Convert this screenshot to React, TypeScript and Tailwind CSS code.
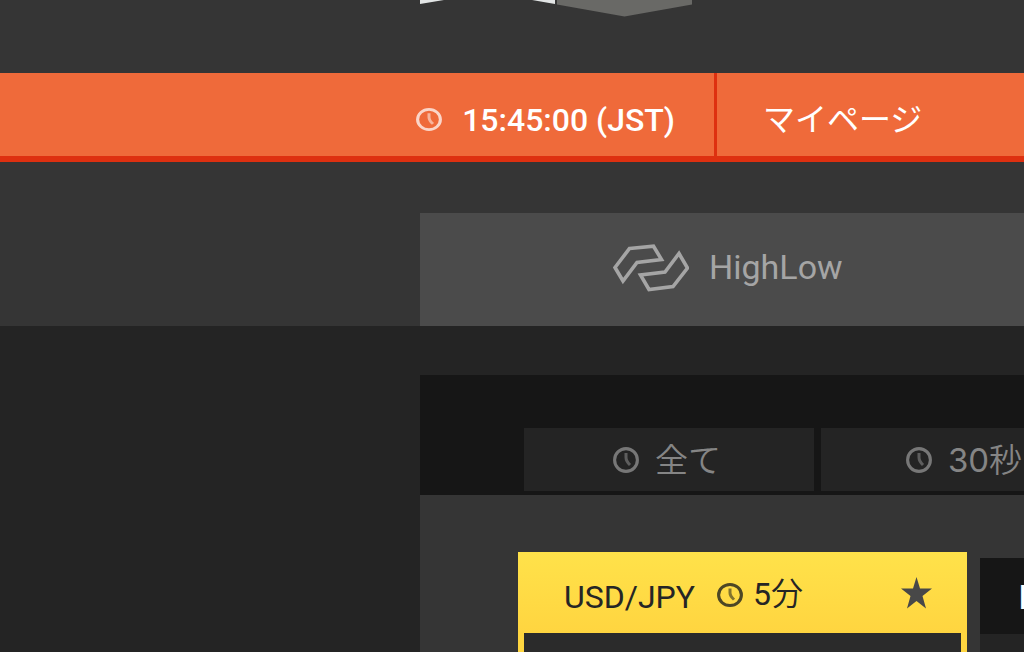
import React from "react";

function Clock({ className }: { className: string }) {
  return (
    <svg viewBox="0 0 26 26" preserveAspectRatio="none" fill="none" stroke="currentColor" aria-hidden="true" className={`w-[26px] shrink-0 ${className}`}>
      <circle cx="13" cy="13" r="11.4" strokeWidth="3.1" />
      <path d="M13 6v4.500Q13 14 17 18" strokeWidth="3" opacity="0.7" />
    </svg>
  );
}

function BrandMark() {
  return (
    <svg viewBox="0 0 76 48" fill="none" stroke="currentColor" strokeWidth="3.6" aria-hidden="true" className="h-12 w-[76px] shrink-0">
      <path d="M16.5 4.5L40.500 2.200L48.500 15.500L24 18.500L10 37L2 23.500Z" />
      <path d="M66 9.500L74.500 24L60 42.500L36 45.500L27.500 31L52 28Z" />
    </svg>
  );
}

function DurationTab({ children }: { children: React.ReactNode }) {
  return (
    <button type="button" className="flex h-[63px] w-[290px] shrink-0 items-center justify-center gap-4 bg-[#242424] pr-1 text-[33px] leading-10 font-[350] whitespace-nowrap text-[#858585]">
      <Clock className="h-[26px] text-[#777777]" />
      <span className="pt-0.5">{children}</span>
    </button>
  );
}

export default function App() {
  return (
    <div className="flex h-screen flex-col overflow-hidden bg-[#353535] font-['Roboto','Noto_Sans_CJK_JP',sans-serif]">
      <header className="h-[73px] shrink-0 pl-[420px]">
        <svg viewBox="0 0 272 17" className="h-[17px] w-[272px]" aria-hidden="true">
          <path d="M0 0H24L0 4ZM112 0H135V4Z" fill="#e2e5e5" />
          <path d="M137 0H272V4.500L204.500 16.500L137 4.500Z" fill="#696966" />
        </svg>
      </header>

      <nav className="flex h-[89px] shrink-0 border-b-[6px] border-[#de3010] bg-[#ef6a3a] text-white">
        <div className="flex w-[717px] shrink-0 items-center justify-end gap-5 border-r-[3px] border-[#de3010] pt-2.5 pr-[39px]">
          <Clock className="h-[23px] text-[#fbd5c8]" />
          <time className="text-[32px] leading-10 font-medium whitespace-nowrap">15:45:00 (JST)</time>
        </div>
        <a href="#mypage" className="flex grow items-center pt-2.5 pl-[46px] text-[32px] leading-10 whitespace-nowrap">マイページ</a>
      </nav>

      <div className="shrink-0 pt-[51px] pl-[420px]">
        <button type="button" className="flex h-[113px] w-full items-center gap-5 bg-[#4b4b4b] pb-1 pl-[193px] text-[34px] leading-10 text-[#a5a5a5]">
          <BrandMark />
          <span className="pb-0.5">HighLow</span>
        </button>
      </div>

      <main className="flex grow flex-col bg-[#242424] pt-[49px] pl-[420px]">
        <div className="flex shrink-0 gap-[7px] overflow-hidden bg-[#161616] pt-[53px] pb-1 pl-[104px]">
          <DurationTab>全て</DurationTab>
          <DurationTab><span className="font-['Inter'] font-normal">30</span>秒</DurationTab>
        </div>

        <div className="flex grow gap-[13px] overflow-hidden bg-[#353535] pt-[57px] pl-[98px]">
          <section className="flex w-[449px] shrink-0 flex-col border-x-[6px] border-[#ffd640] bg-[#2b2b2b]">
            <div className="-mx-[6px] flex h-[81px] shrink-0 items-center bg-linear-to-b from-[#ffe24a] to-[#ffd540] pr-[35px] pl-[46px] text-[#252525]">
              <h2 className="pt-2 text-[32px] leading-10 font-normal">USD/JPY</h2>
              <Clock className="mt-1 ml-[22px] h-[24px] text-[#4d4725]" />
              <span className="ml-[10px] pt-0.5 text-[32px] leading-10 font-[350]"><span className="font-normal">5</span>分</span>
              <button type="button" aria-label="Favorite" className="ml-auto text-[#484848]">
                <svg viewBox="0 0 31 32" className="h-8 w-[31px]" fill="currentColor" aria-hidden="true">
                  <path d="M15.500 0L19 11.500H31L21.500 19L25 31.500L15.500 24L6 31.500L9.500 19L0 11.500H12Z" />
                </svg>
              </button>
            </div>
          </section>

          <section className="mt-[6px] w-[449px] shrink-0 bg-[#242424]">
            <h2 className="flex h-[76px] items-center bg-[#161616] pt-1 pl-[39px] text-[33px] leading-10 font-bold text-white">E</h2>
          </section>
        </div>
      </main>
    </div>
  );
}
